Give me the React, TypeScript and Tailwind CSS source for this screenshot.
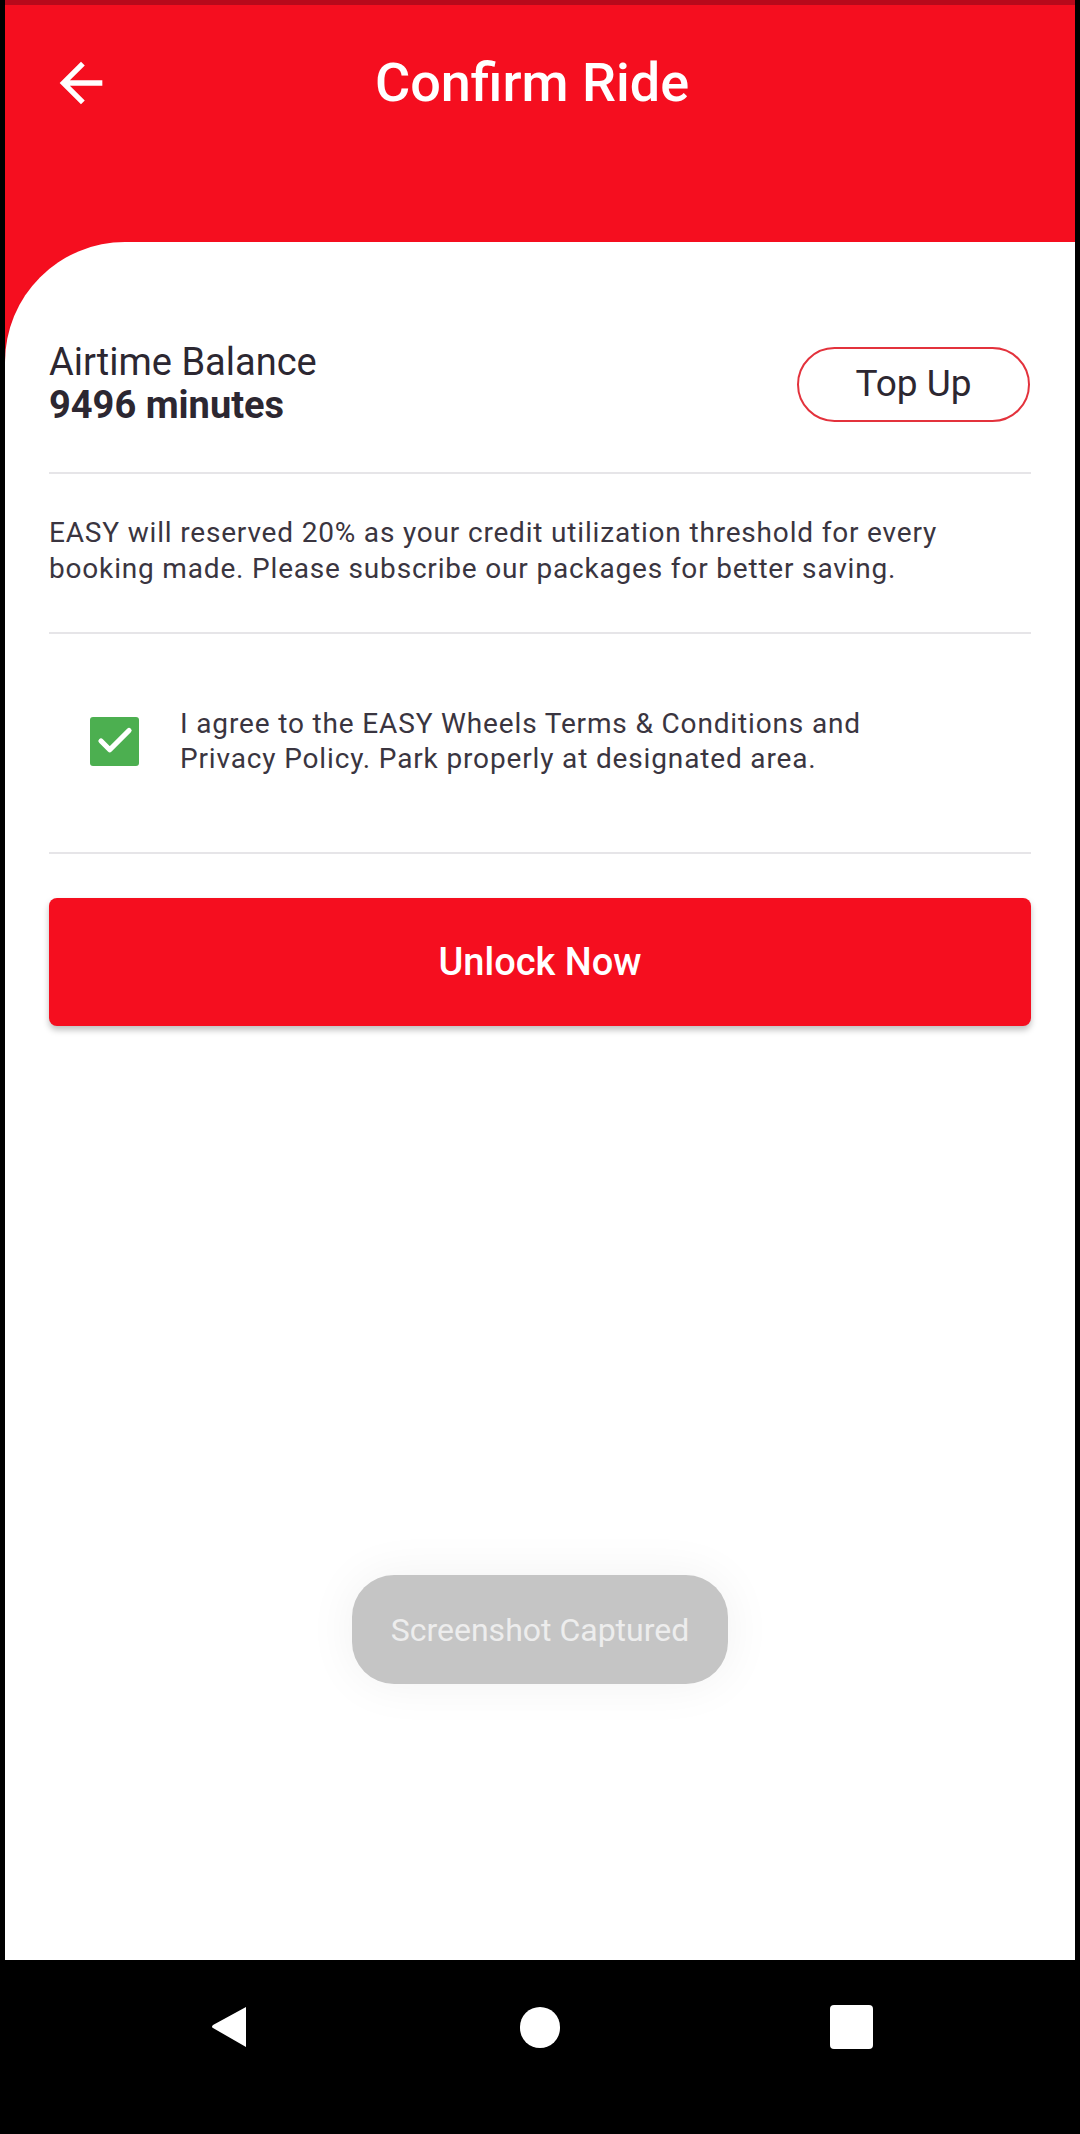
import { Check } from 'lucide-react';

const RED = 'bg-[#f50e1f]';

function BackArrow() {
  return (
    <svg viewBox="0 0 24 24" className="h-[64px] w-[64px] fill-white">
      <path d="M20 11H7.83l5.59-5.59L12 4l-8 8 8 8 1.41-1.41L7.83 13H20v-2z" />
    </svg>
  );
}

function Divider() {
  return <div className="h-[2px] w-full bg-[#e6e5e8]" />;
}

export default function App() {
  return (
    <div className="flex h-[2134px] w-full flex-col bg-black font-[Roboto,sans-serif]">
      <div className="relative mx-[5px] flex flex-1 flex-col bg-white">
        {/* header */}
        <div className={`${RED} flex flex-col`}>
          <div className="h-[5px] bg-[#b8091b]" />
          <div className="flex h-[237px] items-start px-[44px] pt-[46px]">
            <button type="button" className="flex h-[64px] w-[64px] items-center justify-center">
              <BackArrow />
            </button>
            <h1 className="flex-1 text-center text-[54px] font-medium leading-[64px] text-white">
              Confirm Ride
            </h1>
            <div className="w-[80px]" />
          </div>
        </div>

        {/* body */}
        <div className={`${RED} flex flex-1 flex-col`}>
          <div className="flex flex-1 flex-col rounded-tl-[120px] bg-white px-[44px] pt-[99px] shadow-[0_3px_3px_rgba(0,0,0,0.25)]">
            <div className="flex items-center justify-between">
              <div className="text-[38px] leading-[43px] text-[#2c2731]">
                <div>Airtime Balance</div>
                <div className="font-bold">9496 minutes</div>
              </div>
              <button
                type="button"
                className="mr-[1px] flex h-[75px] w-[233px] items-center justify-center rounded-full border-2 border-[#e3323c] text-[37px] text-[#2c2731]"
              >
                Top Up
              </button>
            </div>

            <div className="mt-[45px]">
              <Divider />
            </div>

            <p className="mt-[41px] text-[28px] leading-[36px] tracking-[0.82px] text-[#3a3540]">
              EASY will reserved 20% as your credit utilization threshold for every
              <br />
              booking made. Please subscribe our packages for better saving.
            </p>

            <div className="mt-[45px]">
              <Divider />
            </div>

            <div className="mt-[72px] flex items-center gap-[41px] pl-[41px]">
              <span className="flex h-[49px] w-[49px] shrink-0 items-center justify-center rounded-[3px] bg-[#4caf50]">
                <Check size={42} strokeWidth={3} className="text-white" />
              </span>
              <p className="text-[28px] leading-[35px] tracking-[0.85px] text-[#3a3540]">
                I agree to the EASY Wheels Terms &amp; Conditions and
                <br />
                Privacy Policy. Park properly at designated area.
              </p>
            </div>

            <div className="mt-[76px]">
              <Divider />
            </div>

            <button
              type="button"
              className={`${RED} mt-[44px] flex h-[128px] w-full items-center justify-center rounded-[8px] text-[38px] font-medium text-white shadow-[0_4px_6px_rgba(0,0,0,0.25)]`}
            >
              Unlock Now
            </button>
          </div>
        </div>

        {/* toast */}
        <div className="absolute left-[347px] top-[1575px] flex h-[109px] w-[376px] items-center justify-center rounded-[42px] bg-[#c5c5c5] text-[32px] text-[#ededed] shadow-[0_0_50px_rgba(0,0,0,0.06)]">
          Screenshot Captured
        </div>
      </div>

      {/* nav bar */}
      <div className="grid h-[174px] grid-cols-[311px_311px_311px] justify-center bg-black pt-[45px]">
        <div className="flex h-[44px] items-center justify-center">
          <svg viewBox="0 0 38 44" className="h-[44px] w-[38px] fill-white">
            <path d="M36 2 L36 42 L3 23 Q1 22 3 20 Z" strokeLinejoin="round" />
          </svg>
        </div>
        <div className="flex h-[44px] items-center justify-center">
          <div className="h-[41px] w-[40px] rounded-full bg-white" />
        </div>
        <div className="flex h-[44px] items-center justify-center">
          <div className="h-[44px] w-[43px] rounded-[4px] bg-white" />
        </div>
      </div>
    </div>
  );
}
